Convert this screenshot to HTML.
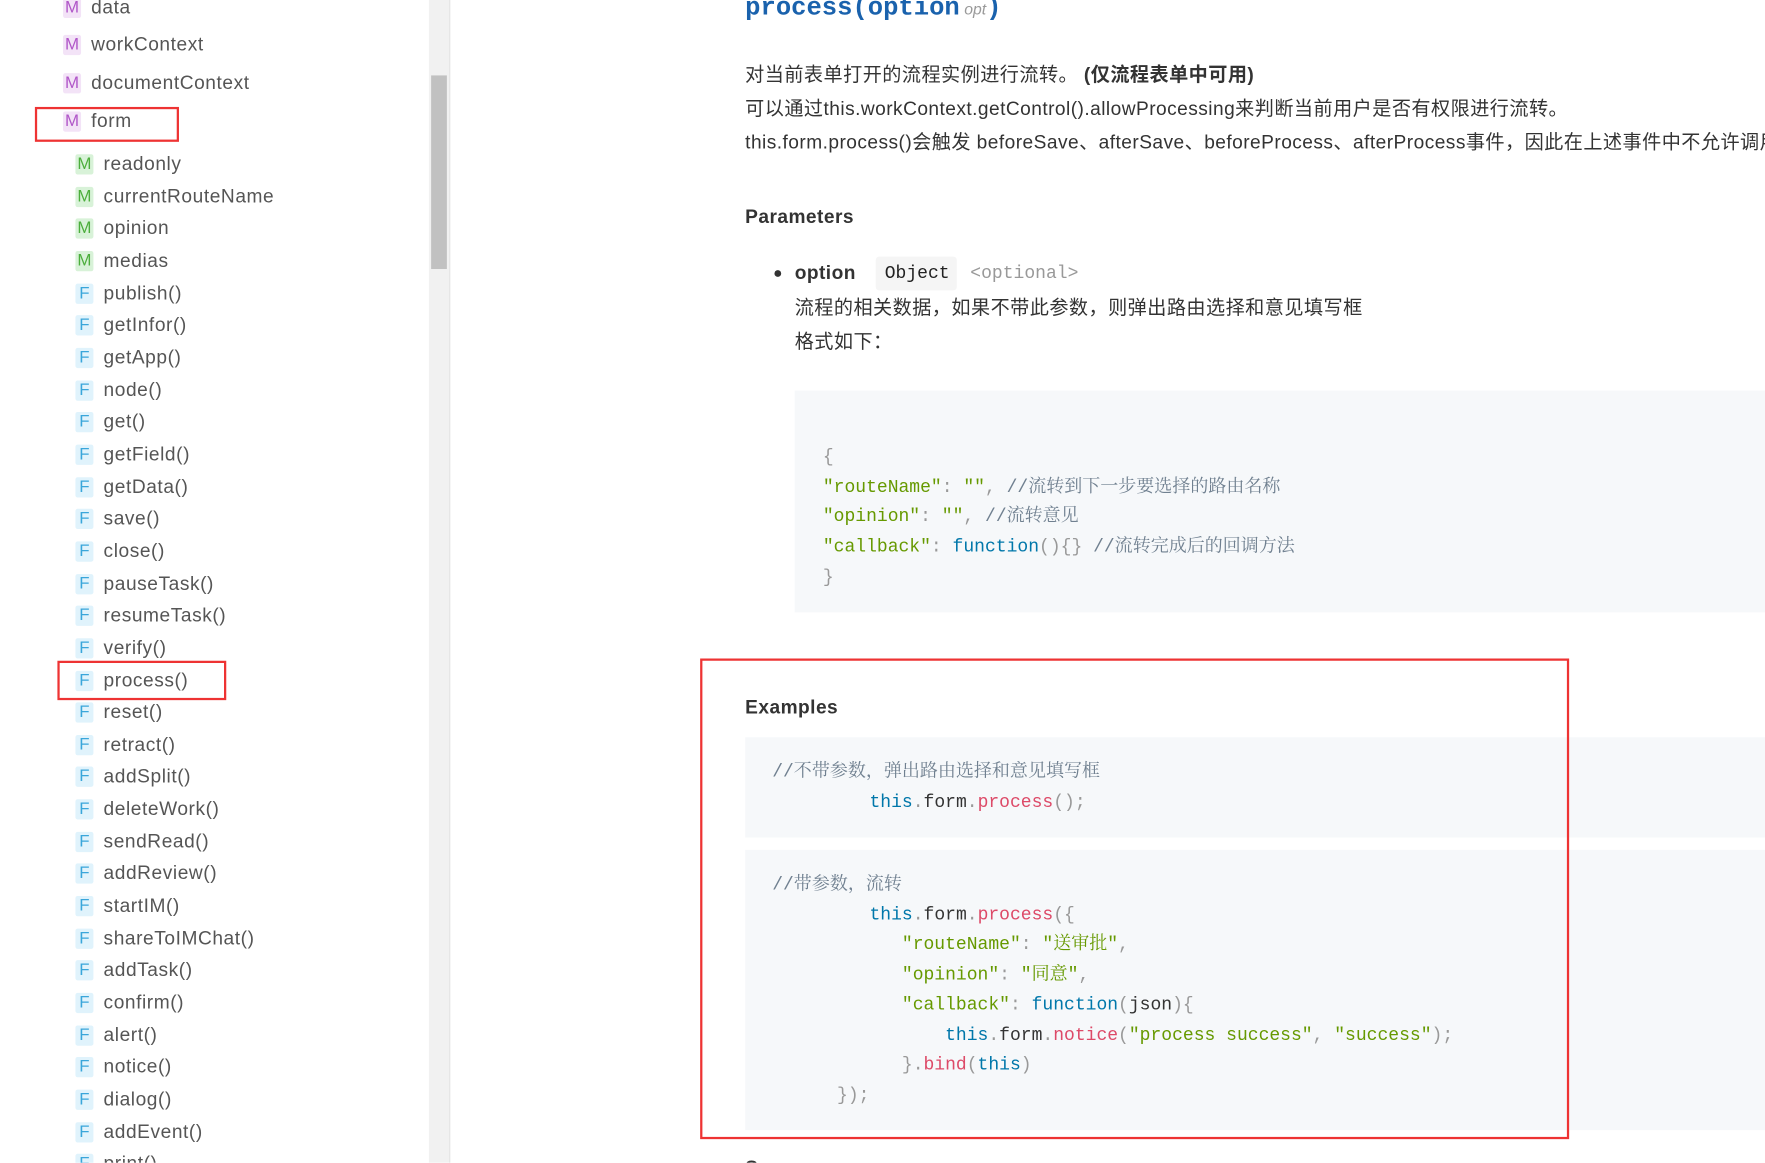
<!DOCTYPE html>
<html><head><meta charset="utf-8">
<style>
html,body{margin:0;padding:0;background:#fff;}
body{width:1765px;height:1163px;overflow:hidden;position:relative;}
#w{position:absolute;left:0;top:0;width:1568px;height:1033px;transform:scale(1.12564);transform-origin:0 0;overflow:hidden;}
.a{position:absolute;white-space:nowrap;}
.sb{font-family:"Liberation Sans","Noto Sans CJK SC",sans-serif;font-size:17px;color:#555;line-height:24px;letter-spacing:0.5px;}
.ic{display:inline-block;width:16px;height:18px;line-height:18px;text-align:center;font-size:15px;border-radius:2px;margin-right:9px;vertical-align:1px;letter-spacing:0;}
.mp{background:#f3e3f7;color:#b056c8;}
.mg{background:#d8f2d8;color:#4cae3c;}
.ff{background:#e0f3fc;color:#3aa6da;}
.p{font-family:"Liberation Sans","Noto Sans CJK SC",sans-serif;font-size:17px;color:#333;line-height:24px;letter-spacing:0.4px;}
.code{font-family:"Liberation Mono","Noto Serif CJK SC",monospace;font-size:16px;line-height:24px;color:#333;}
.code div{white-space:pre;}
.cm{color:#708090;}
.s{color:#690;}
.k{color:#07a;}
.f{color:#dd4a68;}
.pu{color:#999;}
.red{position:absolute;border:2px solid #ee3333;box-sizing:border-box;}
</style></head><body><div id="w">

<div class="a" style="left:381px;top:0;width:18px;height:1033px;background:#f1f1f1;border-right:1px solid #e4e4e4;"></div>
<div class="a" style="left:383px;top:67px;width:14px;height:172px;background:#c1c1c1;"></div>

<div class="a sb" style="left:56px;top:-5px;"><span class="ic mp">M</span>data</div>
<div class="a sb" style="left:56px;top:28px;"><span class="ic mp">M</span>workContext</div>
<div class="a sb" style="left:56px;top:62px;"><span class="ic mp">M</span>documentContext</div>
<div class="a sb" style="left:56px;top:96px;"><span class="ic mp">M</span>form</div>
<div class="red" style="left:31px;top:95px;width:128px;height:31px;"></div>

<div class="a sb" style="left:67px;top:132px;line-height:28.65px;">
<div><span class="ic mg">M</span>readonly</div>
<div><span class="ic mg">M</span>currentRouteName</div>
<div><span class="ic mg">M</span>opinion</div>
<div><span class="ic mg">M</span>medias</div>
<div><span class="ic ff">F</span>publish()</div>
<div><span class="ic ff">F</span>getInfor()</div>
<div><span class="ic ff">F</span>getApp()</div>
<div><span class="ic ff">F</span>node()</div>
<div><span class="ic ff">F</span>get()</div>
<div><span class="ic ff">F</span>getField()</div>
<div><span class="ic ff">F</span>getData()</div>
<div><span class="ic ff">F</span>save()</div>
<div><span class="ic ff">F</span>close()</div>
<div><span class="ic ff">F</span>pauseTask()</div>
<div><span class="ic ff">F</span>resumeTask()</div>
<div><span class="ic ff">F</span>verify()</div>
<div><span class="ic ff">F</span>process()</div>
<div><span class="ic ff">F</span>reset()</div>
<div><span class="ic ff">F</span>retract()</div>
<div><span class="ic ff">F</span>addSplit()</div>
<div><span class="ic ff">F</span>deleteWork()</div>
<div><span class="ic ff">F</span>sendRead()</div>
<div><span class="ic ff">F</span>addReview()</div>
<div><span class="ic ff">F</span>startIM()</div>
<div><span class="ic ff">F</span>shareToIMChat()</div>
<div><span class="ic ff">F</span>addTask()</div>
<div><span class="ic ff">F</span>confirm()</div>
<div><span class="ic ff">F</span>alert()</div>
<div><span class="ic ff">F</span>notice()</div>
<div><span class="ic ff">F</span>dialog()</div>
<div><span class="ic ff">F</span>addEvent()</div>
<div><span class="ic ff">F</span>print()</div>
</div>
<div class="red" style="left:51px;top:587px;width:150px;height:35px;"></div>

<div class="a" style="left:662px;top:-8px;font-family:'Liberation Mono',monospace;font-weight:bold;font-size:22.7px;color:#1a62ad;line-height:30px;">process(option<span style="font-weight:normal;font-style:italic;font-size:14px;color:#999;font-family:'Liberation Sans',sans-serif;margin-left:4px;">opt</span>)</div>

<div class="a p" style="left:662px;top:55px;">对当前表单打开的流程实例进行流转。 <b>(仅流程表单中可用)</b></div>
<div class="a p" style="left:662px;top:85px;">可以通过this.workContext.getControl().allowProcessing来判断当前用户是否有权限进行流转。</div>
<div class="a p" style="left:662px;top:115px;">this.form.process()会触发 beforeSave、afterSave、beforeProcess、afterProcess事件，因此在上述事件中不允许调用</div>

<div class="a p" style="left:662px;top:181px;font-weight:bold;">Parameters</div>

<div class="a" style="left:688px;top:240px;width:6px;height:6px;border-radius:50%;background:#333;"></div>
<div class="a p" style="left:706px;top:231px;font-weight:bold;">option</div>
<div class="a" style="left:778px;top:228px;width:72px;height:30px;background:#f5f5f5;border-radius:3px;"></div>
<div class="a code" style="left:786px;top:231px;color:#222;">Object</div>
<div class="a code" style="left:862px;top:231px;color:#999;">&lt;optional&gt;</div>
<div class="a p" style="left:706px;top:262px;">流程的相关数据，如果不带此参数，则弹出路由选择和意见填写框</div>
<div class="a p" style="left:706px;top:292px;">格式如下：</div>

<div class="a" style="left:706px;top:347px;width:870px;height:197px;background:#f6f8fa;"></div>
<div class="a code" style="left:731px;top:393px;line-height:26.7px;">
<div class="pu">{</div>
<div><span class="s">"routeName"</span><span class="pu">:</span> <span class="s">""</span><span class="pu">,</span> <span class="cm">//流转到下一步要选择的路由名称</span></div>
<div><span class="s">"opinion"</span><span class="pu">:</span> <span class="s">""</span><span class="pu">,</span> <span class="cm">//流转意见</span></div>
<div><span class="s">"callback"</span><span class="pu">:</span> <span class="k">function</span><span class="pu">(){}</span> <span class="cm">//流转完成后的回调方法</span></div>
<div class="pu">}</div>
</div>

<div class="a p" style="left:662px;top:617px;font-weight:bold;">Examples</div>

<div class="a" style="left:662px;top:655px;width:910px;height:89px;background:#f6f8fa;"></div>
<div class="a code" style="left:686px;top:673px;line-height:27px;">
<div class="cm">//不带参数，弹出路由选择和意见填写框</div>
<div>         <span class="k">this</span><span class="pu">.</span>form<span class="pu">.</span><span class="f">process</span><span class="pu">();</span></div>
</div>

<div class="a" style="left:662px;top:755px;width:910px;height:249px;background:#f6f8fa;"></div>
<div class="a code" style="left:686px;top:773px;line-height:26.7px;">
<div class="cm">//带参数，流转</div>
<div>         <span class="k">this</span><span class="pu">.</span>form<span class="pu">.</span><span class="f">process</span><span class="pu">({</span></div>
<div>            <span class="s">"routeName"</span><span class="pu">:</span> <span class="s">"送审批"</span><span class="pu">,</span></div>
<div>            <span class="s">"opinion"</span><span class="pu">:</span> <span class="s">"同意"</span><span class="pu">,</span></div>
<div>            <span class="s">"callback"</span><span class="pu">:</span> <span class="k">function</span><span class="pu">(</span>json<span class="pu">){</span></div>
<div>                <span class="k">this</span><span class="pu">.</span>form<span class="pu">.</span><span class="f">notice</span><span class="pu">(</span><span class="s">"process success"</span><span class="pu">,</span> <span class="s">"success"</span><span class="pu">);</span></div>
<div>            <span class="pu">}.</span><span class="f">bind</span><span class="pu">(</span><span class="k">this</span><span class="pu">)</span></div>
<div>      <span class="pu">});</span></div>
</div>

<div class="red" style="left:622px;top:585px;width:772px;height:427px;"></div>

<div class="a p" style="left:662px;top:1026px;font-weight:bold;">Source</div>

</div></body></html>
